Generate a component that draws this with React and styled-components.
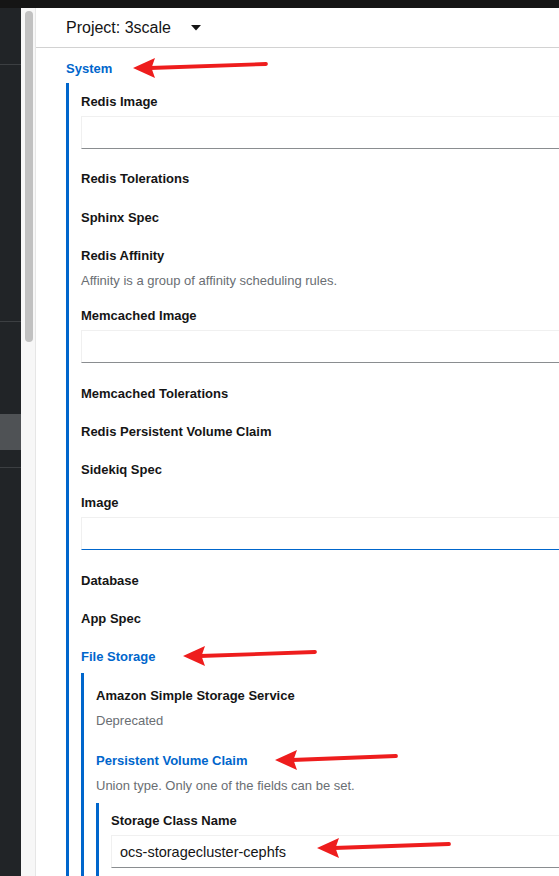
import React from "react";
import styled, { createGlobalStyle } from "styled-components";

const GlobalStyle = createGlobalStyle`
  *, *::before, *::after {
    box-sizing: border-box;
  }
  html, body {
    margin: 0;
    padding: 0;
    height: 100%;
    overflow: hidden;
  }
  body {
    font-family: "Liberation Sans", Arial, sans-serif;
    color: #151515;
    background: #fff;
  }
  #root {
    height: 100%;
  }
`;

const Page = styled.div`
  display: flex;
  flex-direction: column;
  height: 100vh;
`;

const Masthead = styled.div`
  height: 8px;
  flex-shrink: 0;
  background: #151515;
`;

const Shell = styled.div`
  flex: 1;
  display: flex;
  min-height: 0;
`;

const Nav = styled.nav`
  width: 21px;
  flex-shrink: 0;
  display: flex;
  flex-direction: column;
  background: #212427;
`;

const NavBlock = styled.div`
  height: ${(p) => p.$h}px;
  flex-shrink: 0;
  background: ${(p) => (p.$active ? "#4f5255" : "transparent")};
  border-bottom: ${(p) => (p.$divider ? "1px solid #3c3f42" : "none")};
`;

const Track = styled.div`
  width: 15px;
  flex-shrink: 0;
  padding: 3px 0 0 4px;
  background: #f7f7f7;
  border-right: 1px solid #e6e6e6;
`;

const Thumb = styled.div`
  width: 8px;
  height: 331px;
  border-radius: 4px;
  background: #c1c1c1;
`;

const Main = styled.main`
  flex: 1;
  min-width: 0;
  overflow: hidden;
  background: #fff;
`;

const ProjectBar = styled.div`
  height: 40px;
  display: flex;
  align-items: center;
  gap: 20px;
  padding-left: 30px;
  border-bottom: 1px solid #d2d2d2;
  font-size: 16px;
  color: #151515;
`;

const Content = styled.div`
  padding: 10px 0 0 30px;
  margin-right: -80px;
`;

const Heading = styled.div`
  position: relative;
  height: 20px;
  display: flex;
  align-items: center;
  margin-top: ${(p) => p.$gap || 0}px;
  font-size: 13px;
  font-weight: 700;
  color: #06c;
`;

const Body = styled.div`
  margin-top: ${(p) => p.$gap}px;
  padding: ${(p) => p.$pad}px 0 ${(p) => p.$tail || 0}px 12px;
  border-left: 3px solid #06c;
`;

const Field = styled.div`
  margin-top: ${(p) => p.$gap || 0}px;
`;

const Label = styled.div`
  height: 20px;
  line-height: 21px;
  font-size: 13px;
  font-weight: 700;
  color: #151515;
  white-space: nowrap;
`;

const Description = styled.div`
  margin-top: 6px;
  line-height: 19px;
  height: 18px;
  font-size: 13px;
  color: #6a6e73;
  white-space: nowrap;
`;

const TextInput = styled.div`
  position: relative;
  margin-top: 5px;
  height: 33px;
  display: flex;
  align-items: center;
  padding-left: 8px;
  border: 1px solid #f0f0f0;
  border-bottom-color: ${(p) => (p.$focus ? "#06c" : "#8a8d90")};
  font-size: 14.5px;
  color: #151515;
`;

const ArrowMark = styled.svg`
  position: absolute;
  left: ${(p) => p.$left}px;
  top: 50%;
  transform: translateY(calc(-50% + ${(p) => p.$dy || 0}px));
  overflow: visible;
  pointer-events: none;
`;

const Arrow = ({ left, length, dy }) => (
  <ArrowMark
    $left={left}
    $dy={dy}
    width={length}
    height={22}
    viewBox={`0 0 ${length} 22`}
  >
    <line
      x1={17}
      y1={11}
      x2={length - 2}
      y2={7}
      stroke="#ee1d1d"
      strokeWidth={3.8}
      strokeLinecap="round"
    />
    <polygon points="0,11 22,1 18.5,11 22,21" fill="#ee1d1d" />
  </ArrowMark>
);

const Caret = () => (
  <svg width="10" height="6" viewBox="0 0 10 6">
    <polygon points="0,0 10,0 5,5.5" fill="#151515" />
  </svg>
);

const App = () => {
  return (
    <>
      <GlobalStyle />
      <Page>
        <Masthead />
        <Shell>
          <Nav>
            <NavBlock $h={57} $divider />
            <NavBlock $h={257} $divider />
            <NavBlock $h={92} />
            <NavBlock $h={36} $active />
            <NavBlock $h={18} $divider />
          </Nav>
          <Track>
            <Thumb />
          </Track>
          <Main>
            <ProjectBar>
              <span>Project: 3scale</span>
              <Caret />
            </ProjectBar>
            <Content>
              <Heading>
                System
                <Arrow left={67} length={135} />
              </Heading>
              <Body $gap={5} $pad={8}>
                <Field>
                  <Label>Redis Image</Label>
                  <TextInput />
                </Field>
                <Field $gap={19}>
                  <Label>Redis Tolerations</Label>
                </Field>
                <Field $gap={19}>
                  <Label>Sphinx Spec</Label>
                </Field>
                <Field $gap={18}>
                  <Label>Redis Affinity</Label>
                  <Description>Affinity is a group of affinity scheduling rules.</Description>
                </Field>
                <Field $gap={16}>
                  <Label>Memcached Image</Label>
                  <TextInput />
                </Field>
                <Field $gap={20}>
                  <Label>Memcached Tolerations</Label>
                </Field>
                <Field $gap={18}>
                  <Label>Redis Persistent Volume Claim</Label>
                </Field>
                <Field $gap={18}>
                  <Label>Sidekiq Spec</Label>
                </Field>
                <Field $gap={13}>
                  <Label>Image</Label>
                  <TextInput $focus />
                </Field>
                <Field $gap={20}>
                  <Label>Database</Label>
                </Field>
                <Field $gap={18}>
                  <Label>App Spec</Label>
                </Field>

                <Heading $gap={18}>
                  File Storage
                  <Arrow left={102} length={134} />
                </Heading>
                <Body $gap={7} $pad={12}>
                  <Field>
                    <Label>Amazon Simple Storage Service</Label>
                    <Description>Deprecated</Description>
                  </Field>

                  <Heading $gap={21}>
                    Persistent Volume Claim
                    <Arrow left={179} length={123} />
                  </Heading>
                  <Description>Union type. Only one of the fields can be set.</Description>
                  <Body $gap={9} $pad={7} $tail={60}>
                    <Field>
                      <Label>Storage Class Name</Label>
                      <TextInput>
                        ocs-storagecluster-cephfs
                        <Arrow left={205} length={134} dy={-4} />
                      </TextInput>
                    </Field>
                  </Body>
                </Body>
              </Body>
            </Content>
          </Main>
        </Shell>
      </Page>
    </>
  );
};

export default App;
